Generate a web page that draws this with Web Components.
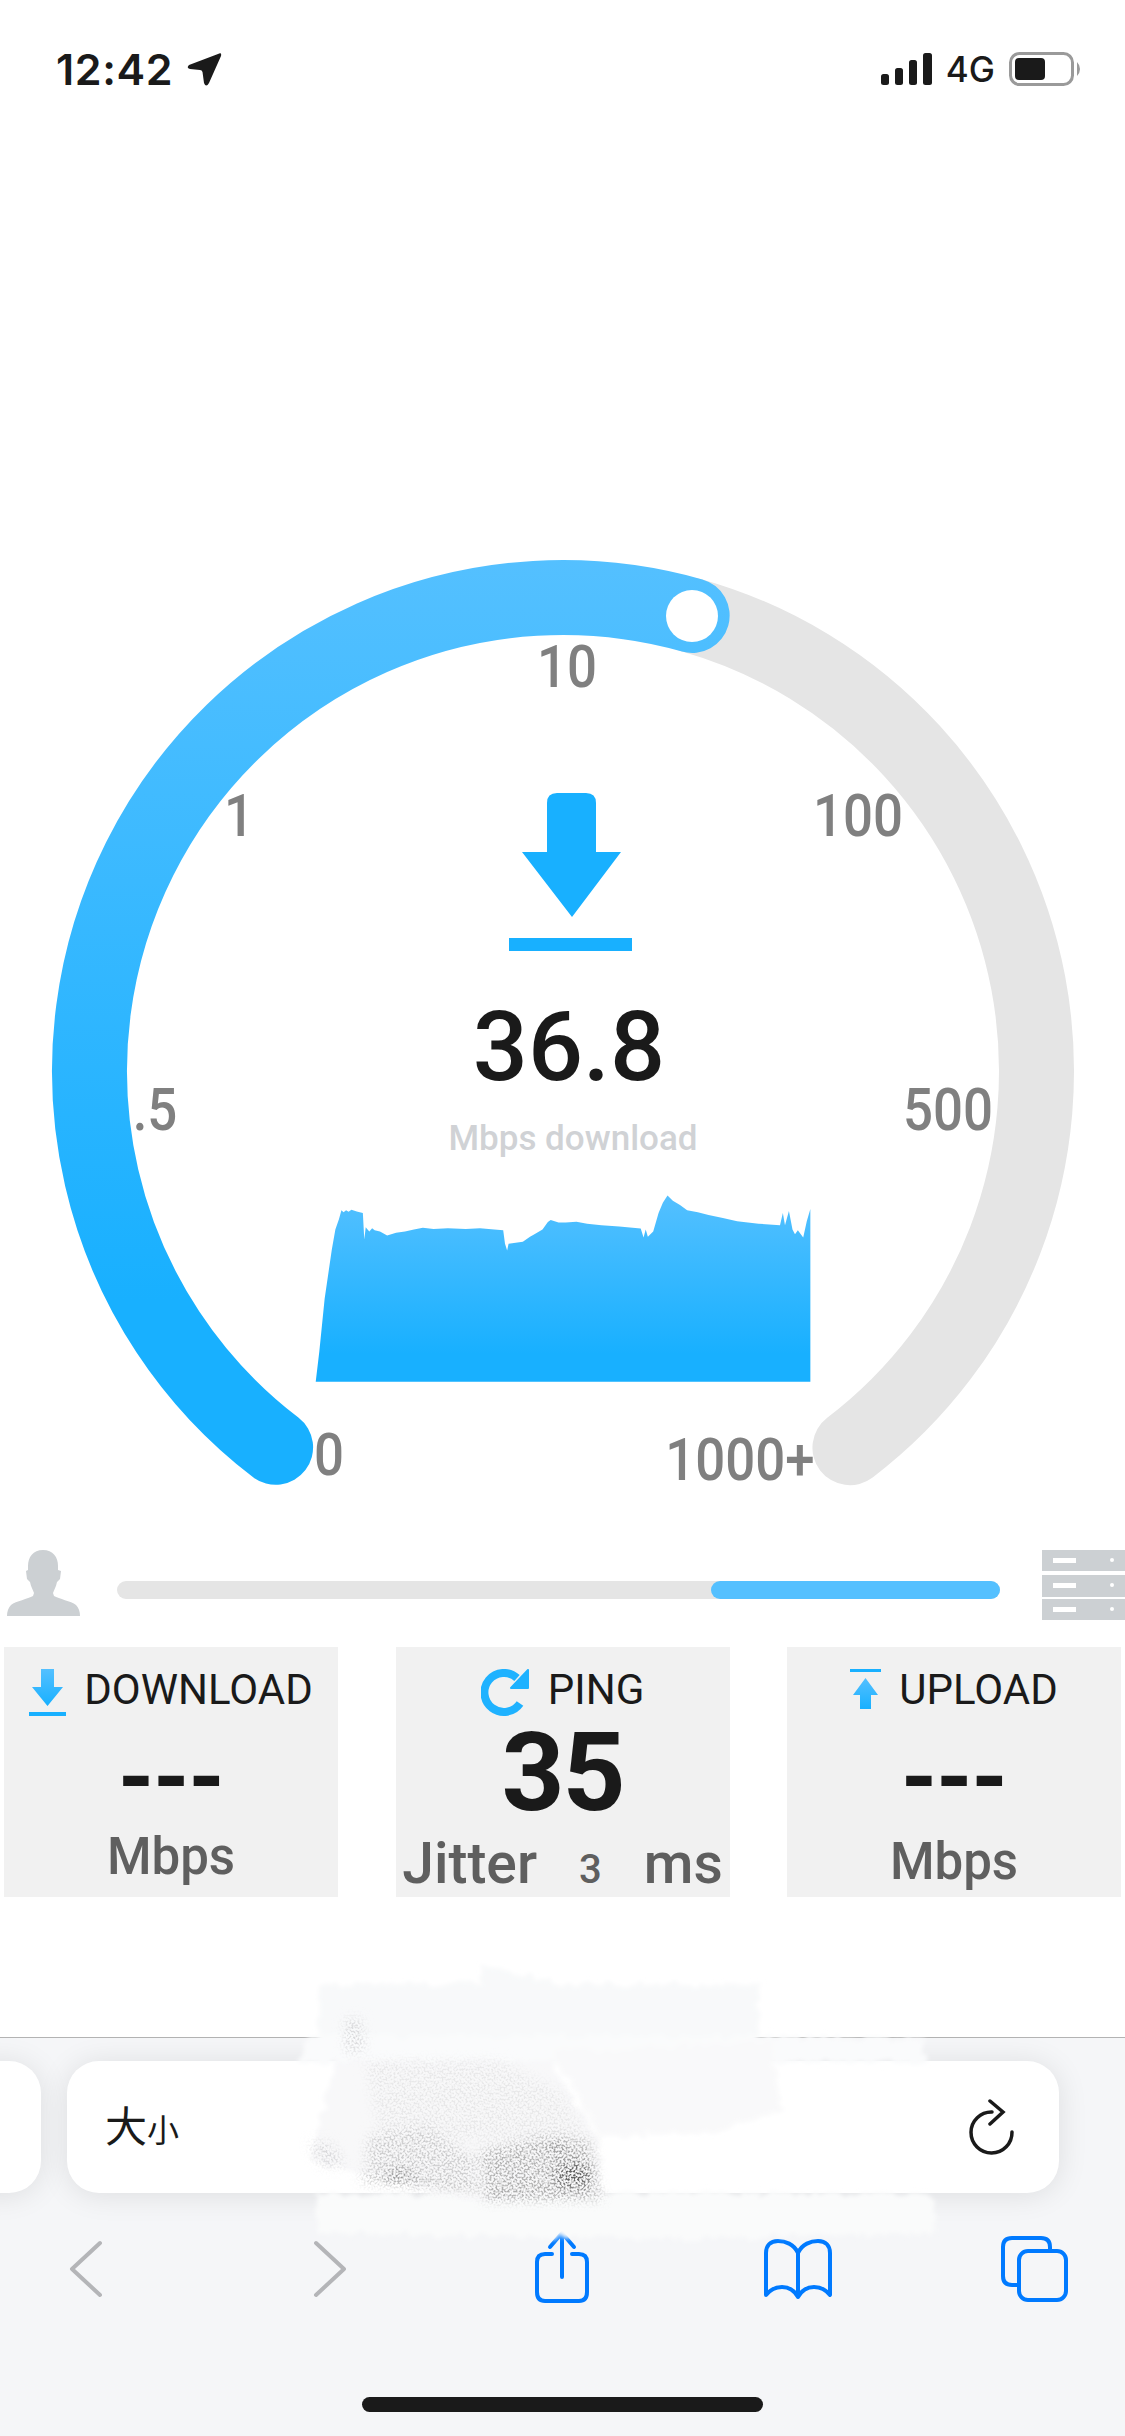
<!DOCTYPE html>
<html lang="en">
<head>
<meta charset="utf-8">
<title>Speed test</title>
<style>
  html, body { margin: 0; padding: 0; background: #fff; }
  body {
    width: 1125px;
    height: 2436px;
    overflow: hidden;
    display: flex;
    flex-direction: column;
    font-family: Roboto, "Liberation Sans", sans-serif;
  }
  browser-toolbar { margin-top: auto; }
</style>
</head>
<body>
<status-bar></status-bar>
<speed-gauge></speed-gauge>
<connection-bar></connection-bar>
<stat-row>
  <stat-card label="DOWNLOAD" icon="down" value="---" style="--unit-top: 0px"><span>Mbps</span></stat-card>
  <stat-card label="PING" icon="ping" value="35" style="--unit-top: 8px; --unit-size: 57px"><span>Jitter</span><small>3</small><span>ms</span></stat-card>
  <stat-card label="UPLOAD" icon="up" value="---" style="--unit-top: 5px"><span>Mbps</span></stat-card>
</stat-row>
<browser-toolbar></browser-toolbar>

<script>
class StatusBar extends HTMLElement {
  constructor() {
    super();
    this.attachShadow({ mode: "open" });
  }

  connectedCallback() {
    this.shadowRoot.innerHTML = `
      <style>
        :host {
          display: flex;
          justify-content: space-between;
          height: 120px;
          padding: 46px 44px 0 56px;
          box-sizing: border-box;
          color: #1a1a1a;
          font-family: Inter, "Liberation Sans", sans-serif;
        }
        .left, .right { display: flex; align-items: flex-start; }
        .time { font-size: 43px; font-weight: 600; line-height: 46px; letter-spacing: 0.6px; }
        .arrow { margin: 7px 0 0 14px; }
        .signal { margin-top: 7px; }
        .net { font-size: 35px; font-weight: 500; line-height: 44px; margin: 1px 0 0 14px; }
        .battery { margin: 6px 0 0 14px; }
      </style>
      <div class="left">
        <span class="time">12:42</span>
        <svg class="arrow" width="35" height="34" viewBox="0 0 35 34"><path d="M31 1 Q35 -1 34 3 L22 30 Q19 35 17 30 L15.500 19 Q15 17 13 17 L3 16 Q-1 15 2 12 Z" fill="#1a1a1a"/></svg>
      </div>
      <div class="right">
        <svg class="signal" width="51" height="32" viewBox="0 0 51 32" fill="#1a1a1a">
          <rect x="0" y="21" width="8" height="11" rx="2.5"/>
          <rect x="14" y="15" width="8" height="17" rx="2.5"/>
          <rect x="28" y="7" width="8" height="25" rx="2.5"/>
          <rect x="42" y="0" width="9" height="32" rx="2.5"/>
        </svg>
        <span class="net">4G</span>
        <svg class="battery" width="72" height="34" viewBox="0 0 72 34">
          <rect x="1.5" y="1.5" width="62" height="31" rx="9" fill="none" stroke="#9a9a9a" stroke-width="3"/>
          <rect x="6" y="6" width="30" height="22" rx="4" fill="#1a1a1a"/>
          <path d="M68 10 Q71 13 71 17 Q71 21 68 24 Z" fill="#9a9a9a"/>
        </svg>
      </div>
    `;
  }
}

class SpeedGauge extends HTMLElement {
  constructor() {
    super();
    this.attachShadow({ mode: "open" });
  }

  // point on the gauge circle, degrees clockwise from the top
  point(deg) {
    const rad = (deg * Math.PI) / 180;
    return `${(563 + 473.5 * Math.sin(rad)).toFixed(2)} ${(1071 - 473.5 * Math.cos(rad)).toFixed(2)}`;
  }

  connectedCallback() {
    // outline of the speed graph, traced from the reference
    const graph = "100,1523 110,1450 125,1320 145,1200 155,1150 165,1125 172,1103 178,1108 185,1103 192,1107 200,1102 215,1106 232,1110 236,1175 240,1145 250,1155 258,1147 265,1152 280,1155 300,1165 325,1158 350,1155 375,1150 400,1146 430,1149 470,1147 520,1149 560,1147 600,1150 625,1152 630,1185 636,1202 640,1185 660,1183 680,1180 700,1168 710,1163 735,1150 750,1132 758,1127 780,1133 800,1133 830,1131 860,1136 900,1140 950,1143 1010,1148 1018,1170 1024,1150 1030,1168 1045,1155 1060,1110 1072,1085 1085,1067 1100,1080 1120,1090 1140,1103 1170,1108 1200,1115 1240,1122 1280,1130 1340,1136 1400,1140 1408,1110 1414,1140 1425,1105 1435,1150 1442,1162 1450,1152 1465,1170 1475,1130 1485,1100 1485,1523";
    const ticks = [
      ["10", 567, 687], ["1", 239, 836], ["100", 858, 836], [".5", 155, 1130],
      ["500", 948, 1130], ["0", 329, 1475], ["1000+", 740, 1480],
    ];
    const start = this.point(-142.63);
    const now = this.point(15.83);
    const end = this.point(142.7);
    this.shadowRoot.innerHTML = `
      <style>
        :host { display: block; height: 1410px; }
        svg { display: block; }
        text { font-family: Roboto, "Liberation Sans", sans-serif; }
        .tick { font-size: 60px; font-weight: 500; fill: #808080; text-anchor: middle; }
        .speed { font-size: 97px; font-weight: 500; fill: #1a1a1a; text-anchor: middle; }
        .unit { font-size: 35px; font-weight: 500; fill: #d0d2d5; text-anchor: middle; }
      </style>
      <svg width="1125" height="1410" viewBox="0 120 1125 1410">
        <defs>
          <linearGradient id="arc" gradientUnits="userSpaceOnUse" x1="0" y1="560" x2="0" y2="1300">
            <stop offset="0" stop-color="#54c0ff"/>
            <stop offset="1" stop-color="#18b0ff"/>
          </linearGradient>
          <linearGradient id="fill" x1="0" y1="0" x2="0" y2="1">
            <stop offset="0" stop-color="#54c0ff"/>
            <stop offset="0.85" stop-color="#18b0ff"/>
          </linearGradient>
        </defs>
        <path d="M${now} A473.5 473.5 0 0 1 ${end}" fill="none" stroke="#e5e5e5" stroke-width="75" stroke-linecap="round"/>
        <path d="M${start} A473.5 473.5 0 0 1 ${now}" fill="none" stroke="url(#arc)" stroke-width="75" stroke-linecap="round"/>
        <circle cx="692" cy="616" r="26" fill="#fff"/>
        ${ticks.map(([t, x, y]) => `<text class="tick" transform="translate(${x} ${y}) scale(0.88 1)">${t}</text>`).join("")}
        <path d="M547 803 Q547 793 557 793 H586 Q596 793 596 803 V852 H621 L572 917 L522 852 H547 Z" fill="#18b0ff"/>
        <rect x="509" y="938" width="123" height="13" fill="#18b0ff"/>
        <text class="speed" x="569" y="1080">36.8</text>
        <text class="unit" x="573" y="1150">Mbps download</text>
        <g transform="translate(280 760) scale(0.35714 0.40816)">
          <polygon points="${graph}" fill="url(#fill)"/>
        </g>
      </svg>
    `;
  }
}

class ConnectionBar extends HTMLElement {
  constructor() {
    super();
    this.attachShadow({ mode: "open" });
  }

  connectedCallback() {
    this.shadowRoot.innerHTML = `
      <style>
        :host {
          display: flex;
          align-items: flex-start;
          height: 117px;
          padding: 20px 0 0 7px;
          box-sizing: border-box;
        }
        svg { display: block; flex: none; }
        .track {
          width: 883px;
          height: 18px;
          margin: 31px 42px 0 37px;
          border-radius: 9px;
          background: #e5e5e5;
          display: flex;
          justify-content: flex-end;
          flex: none;
        }
        .done { width: 289px; border-radius: 9px; background: #54c0ff; }
      </style>
      <svg width="73" height="66" viewBox="0 0 73 66">
        <path fill="#ccd0d3" d="M36 0 C46 0 51 7 51 16 L51 20 L54 21 L53 29 L50 32 C49 37 47 40 46 43 L47 46 C52 49 64 51 69 55 C72 58 73 62 73 66 L0 66 C0 62 1 58 4 55 C9 51 21 49 26 46 L27 43 C26 40 24 37 23 32 L20 29 L19 21 L21 20 L21 16 C21 7 26 0 36 0 Z"/>
      </svg>
      <div class="track"><div class="done"></div></div>
      <svg width="83" height="70" viewBox="0 0 83 70">
        <g fill="#ccd0d3">
          <rect width="83" height="21"/><rect y="25" width="83" height="22"/><rect y="49" width="83" height="21"/>
        </g>
        <g fill="#fff">
          <rect x="11" y="8" width="23" height="5"/><circle cx="70" cy="10" r="2"/>
          <rect x="11" y="33" width="23" height="5"/><circle cx="70" cy="35" r="2"/>
          <rect x="11" y="57" width="23" height="5"/><circle cx="70" cy="59" r="2"/>
        </g>
      </svg>
    `;
  }
}

class StatRow extends HTMLElement {
  constructor() {
    super();
    this.attachShadow({ mode: "open" });
  }

  connectedCallback() {
    this.shadowRoot.innerHTML = `
      <style>
        :host {
          display: grid;
          grid-template-columns: repeat(3, 334px);
          justify-content: space-between;
          padding: 0 4px;
        }
      </style>
      <slot></slot>
    `;
  }
}

class StatCard extends HTMLElement {
  constructor() {
    super();
    this.attachShadow({ mode: "open" });
  }

  static get icons() {
    const grad = `<defs><linearGradient id="g" x1="0" y1="0" x2="0" y2="1"><stop offset="0" stop-color="#54c0ff"/><stop offset="1" stop-color="#18b0ff"/></linearGradient></defs>`;
    return {
      down: `<svg width="37" height="47" viewBox="0 0 37 47">${grad}
        <path d="M12 0 H25 V18 H34 L18.500 37 L3 18 H12 Z" fill="url(#g)"/>
        <rect y="43" width="37" height="4" fill="#18b0ff"/></svg>`,
      ping: `<svg width="49" height="47" viewBox="0 0 49 47">
        <path d="M36 9 A19.500 19.500 0 1 0 39 34.500" fill="none" stroke="#1fb2ff" stroke-width="8"/>
        <path d="M47 1 V19 H30 Z" fill="#1fb2ff" stroke="#1fb2ff" stroke-width="2" stroke-linejoin="round"/></svg>`,
      up: `<svg width="31" height="40" viewBox="0 0 31 40">${grad}
        <rect width="31" height="3" fill="#18b0ff"/>
        <path d="M15.500 9 L28 26 H21 V40 H10 V26 H3 Z" fill="url(#g)"/></svg>`,
    };
  }

  connectedCallback() {
    const label = this.getAttribute("label");
    const value = this.getAttribute("value");
    const icon = StatCard.icons[this.getAttribute("icon")];
    this.shadowRoot.innerHTML = `
      <style>
        :host {
          display: flex;
          flex-direction: column;
          align-items: center;
          height: 250px;
          background: #f1f1f1;
          color: #1a1a1a;
          font-family: Roboto, "Liberation Sans", sans-serif;
          overflow: hidden;
        }
        .head {
          display: flex;
          align-items: flex-start;
          gap: 18px;
          height: 70px;
          padding-top: 22px;
          box-sizing: border-box;
        }
        .label { font-size: 42px; line-height: 40px; margin-top: 1px; }
        .value { font-size: 110px; font-weight: 700; line-height: 100px; height: 100px; margin-top: 7px; letter-spacing: -2px; }
        .value.dash { font-size: 92px; letter-spacing: -1px; padding-top: 4px; height: 96px; }
        .unit {
          display: flex;
          align-items: baseline;
          gap: 42px;
          margin-top: calc(3px + var(--unit-top, 0px));
          font-size: var(--unit-size, 51px);
          font-weight: 500;
          line-height: 60px;
          color: #5f5f5f;
        }
        ::slotted(small) { font-size: 40px; }
      </style>
      <div class="head">${icon}<span class="label">${label}</span></div>
      <div class="value ${value === "---" ? "dash" : ""}">${value}</div>
      <div class="unit"><slot></slot></div>
    `;
  }
}

class BrowserToolbar extends HTMLElement {
  constructor() {
    super();
    this.attachShadow({ mode: "open" });
  }

  connectedCallback() {
    this.shadowRoot.innerHTML = `
      <style>
        :host {
          display: block;
          position: relative;
          height: 399px;
          box-sizing: border-box;
          background: #f5f6f8;
          border-top: 1px solid #b3b3b3;
          color: #1a1a1a;
        }
        .tabs {
          display: flex;
          gap: 26px;
          height: 132px;
          margin-top: 23px;
          margin-left: -100px;
        }
        .pill {
          height: 132px;
          background: #fff;
          border-radius: 32px;
          box-shadow: 0 2px 30px rgba(0, 0, 0, 0.1);
          box-sizing: border-box;
          flex: none;
        }
        .prev { width: 141px; }
        .url {
          width: 992px;
          display: flex;
          align-items: center;
          justify-content: space-between;
          padding: 0 44px 0 38px;
        }
        .size { font-family: "Noto Sans CJK SC", sans-serif; font-size: 42px; line-height: 50px; margin-top: -2px; }
        .size small { font-size: 32px; }
        .nav { display: block; margin-top: 36px; }
        .home {
          position: absolute;
          left: 362px;
          top: 359px;
          width: 401px;
          height: 15px;
          border-radius: 7.500px;
          background: #1a1a1a;
        }
        .smudge { position: absolute; left: 0; top: -88px; pointer-events: none; }
      </style>
      <div class="tabs">
        <div class="pill prev"></div>
        <div class="pill url">
          <span class="size">大<small>小</small></span>
          <svg width="46" height="56" viewBox="0 0 46 56" fill="none" stroke="#1a1a1a" stroke-width="3.500" stroke-linecap="round">
            <path d="M23 13 A20.500 20.500 0 1 0 43 33"/>
            <path d="M21 2 L34 13 L21 25"/>
          </svg>
        </div>
      </div>
      <svg class="nav" width="1125" height="80" viewBox="0 2228 1125 80" fill="none" stroke-linecap="round" stroke-linejoin="round">
        <path d="M100 2242 L72 2268 L100 2294" stroke="#b4b5b8" stroke-width="4"/>
        <path d="M316 2242 L344 2268 L316 2294" stroke="#b4b5b8" stroke-width="4"/>
        <g stroke="#007aff" stroke-width="4">
          <path d="M552 2253 H545 Q537 2253 537 2261 V2291 Q537 2300 545 2300 H579 Q587 2300 587 2291 V2261 Q587 2253 579 2253 H572"/>
          <path d="M562 2276 V2233 M550 2246 L562 2232 L574 2246"/>
          <path d="M798 2252 C794 2243 785 2240 778 2240 C770 2240 766 2245 766 2252 V2294 C774 2284 790 2282 798 2296 C806 2282 822 2284 830 2294 V2252 C830 2245 826 2240 818 2240 C811 2240 802 2243 798 2252 Z M798 2252 V2296"/>
          <rect x="1019" y="2250" width="47" height="49" rx="9"/>
          <path d="M1017 2284 H1012 Q1003 2284 1003 2275 V2246 Q1003 2237 1012 2237 H1041 Q1050 2237 1050 2246 V2250"/>
        </g>
      </svg>
      <div class="home"></div>
      <svg class="smudge" width="1125" height="300" viewBox="0 1949 1125 300">
        <defs>
          <filter id="rough" x="-10%" y="-10%" width="120%" height="120%">
            <feTurbulence type="fractalNoise" baseFrequency="0.09" numOctaves="3" seed="3"/>
            <feDisplacementMap in="SourceGraphic" scale="14" xChannelSelector="R" yChannelSelector="G"/>
            <feGaussianBlur stdDeviation="2"/>
          </filter>
          <filter id="grain" x="-15%" y="-15%" width="130%" height="130%">
            <feGaussianBlur in="SourceGraphic" stdDeviation="6" result="b"/>
            <feTurbulence type="fractalNoise" baseFrequency="0.5" numOctaves="3" seed="7"/>
            <feColorMatrix values="0 0 0 0 0  0 0 0 0 0  0 0 0 0 0  5 0 0 0 -2.200" result="n"/>
            <feComposite in="b" in2="n" operator="in"/>
          </filter>
        </defs>
        <g filter="url(#rough)">
          <polygon fill="#f8f9fa" points="318,1985 480,1982 483,1965 560,1982 760,1985 760,2037 318,2037"/>
          <polygon fill="#fafbfc" points="308,2035 846,2035 925,2040 925,2062 300,2062"/>
          <polygon fill="#fafbfb" points="313,2192 933,2192 936,2232 660,2238 320,2232"/>
          <polygon fill="#f9f9fa" points="552,2050 770,2040 782,2110 710,2132 600,2135"/>
          <polygon fill="#f8f8f9" points="335,2060 550,2060 600,2140 600,2195 470,2200 310,2160"/>
        </g>
        <g filter="url(#grain)">
          <polygon fill="#d6d6d8" points="345,2018 362,2018 364,2050 346,2052"/>
          <polygon fill="#e8e8e9" points="365,2060 500,2060 560,2090 590,2140 380,2140"/>
          <polygon fill="#d6d6d8" points="309,2142 332,2142 345,2165 322,2165"/>
          <polygon fill="#cfcfd0" points="368,2135 425,2125 480,2160 470,2180 365,2170"/>
          <polygon fill="#b4b4b4" points="480,2150 545,2135 590,2140 598,2188 486,2194"/>
          <polygon fill="#5a5a5a" points="552,2170 575,2158 592,2168 590,2186 560,2188"/>
          <polygon fill="#777" points="550,2141 566,2143 564,2152 552,2151"/>
          <polygon fill="#5f5f5f" points="384,2172 404,2168 416,2176 410,2182 388,2181"/>
          <polygon fill="#999" points="362,2174 480,2182 480,2188 362,2180"/>
          <polygon fill="#8a8a8a" points="484,2192 600,2191 602,2197 484,2198"/>
        </g>
      </svg>
    `;
  }
}

customElements.define("status-bar", StatusBar);
customElements.define("speed-gauge", SpeedGauge);
customElements.define("connection-bar", ConnectionBar);
customElements.define("stat-row", StatRow);
customElements.define("stat-card", StatCard);
customElements.define("browser-toolbar", BrowserToolbar);
</script>
</body>
</html>
